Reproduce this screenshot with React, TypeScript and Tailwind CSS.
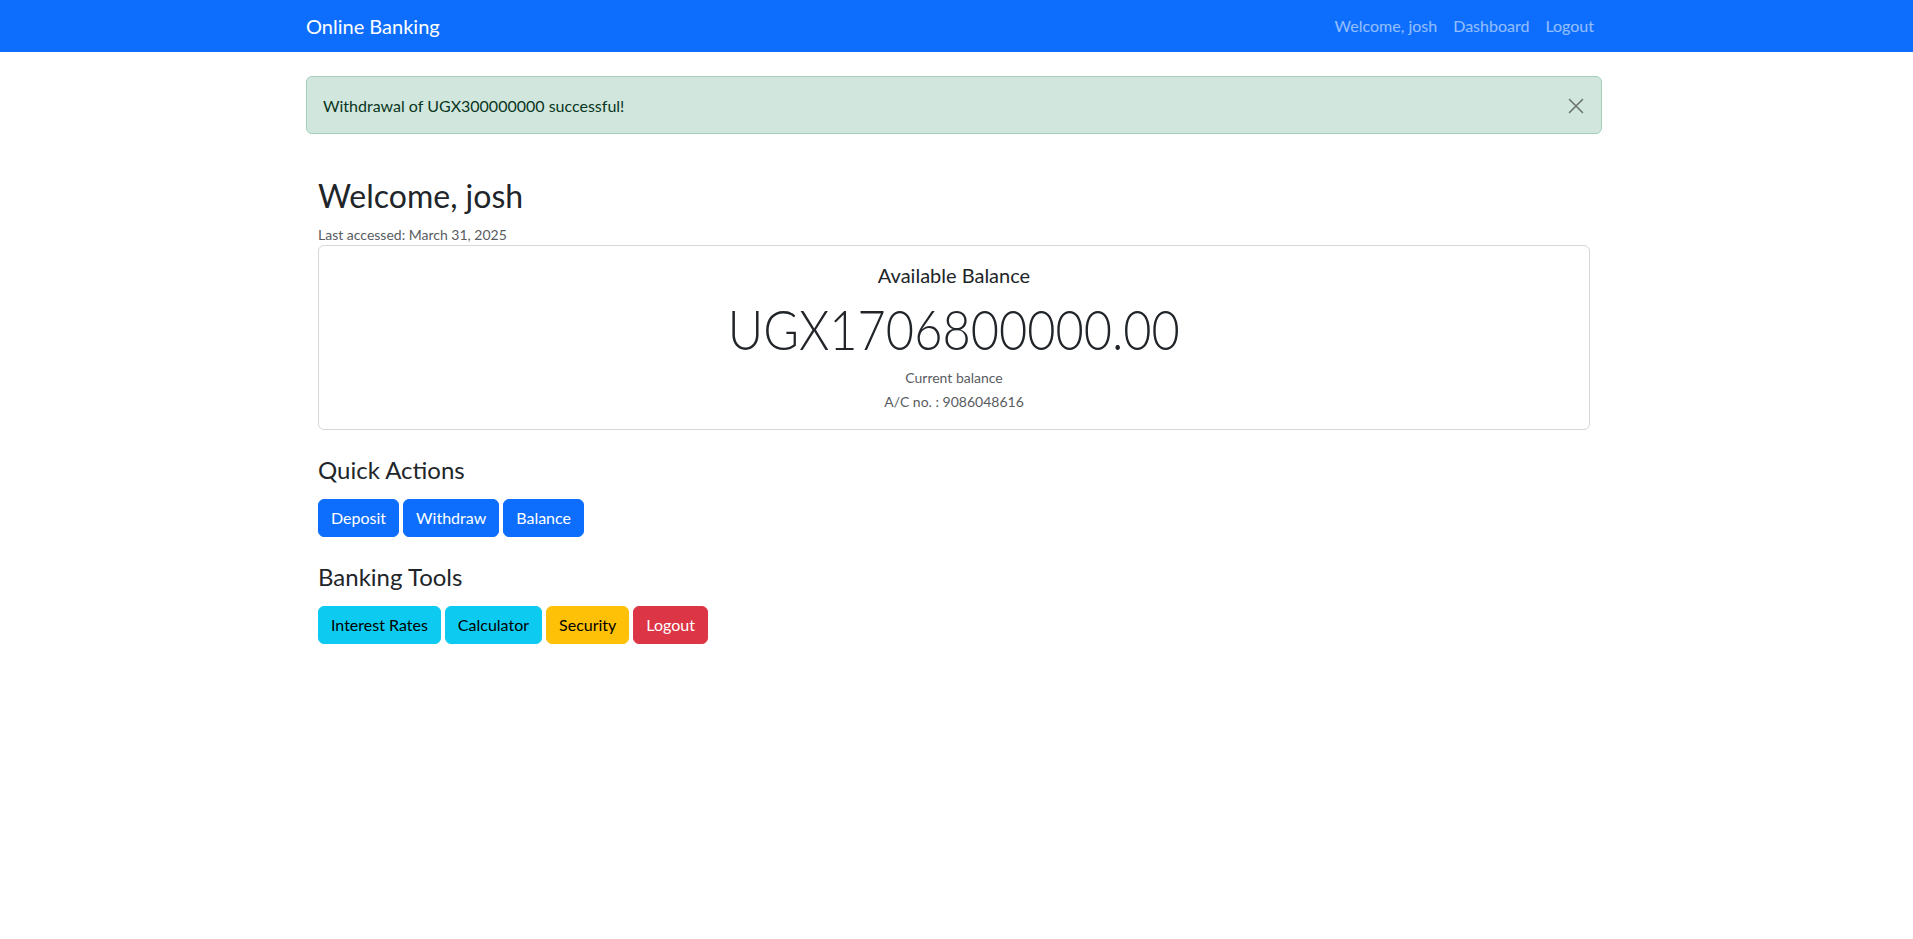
import React from "react";

function CloseIcon() {
  return (
    <svg width="16" height="16" viewBox="0 0 16 16" fill="none" aria-hidden="true">
      <path d="M1.5 1.5L14.5 14.5M14.5 1.5L1.5 14.5" stroke="currentColor" strokeWidth="1.6" strokeLinecap="round" />
    </svg>
  );
}

const quickActions = ["Deposit", "Withdraw", "Balance"];

const tools = [
  { label: "Interest Rates", cls: "bg-[#0dcaf0] border-[#0dcaf0] text-black" },
  { label: "Calculator", cls: "bg-[#0dcaf0] border-[#0dcaf0] text-black" },
  { label: "Security", cls: "bg-[#ffc107] border-[#ffc107] text-black" },
  { label: "Logout", cls: "bg-[#dc3545] border-[#dc3545] text-white" },
];

export default function App() {
  return (
    <div className="min-h-screen bg-white font-[Lato,'Liberation_Sans',sans-serif] text-[16px] leading-[1.5] text-[#212529]">
      <nav className="h-[52px] bg-[#0d6efd]">
        <div className="ml-[306px] flex h-full w-[1296px] items-center justify-between">
          <a href="#" className="text-[20px] text-white">
            Online Banking
          </a>
          <div className="flex items-center">
            <a href="#" className="px-2 text-white/55">Welcome, josh</a>
            <a href="#" className="px-2 text-white/55">Dashboard</a>
            <a href="#" className="px-2 text-white/55">Logout</a>
          </div>
        </div>
      </nav>

      <main className="ml-[306px] w-[1296px] pt-6">
        <div className="flex items-center justify-between rounded-md border border-[#a3cfbb] bg-[#d1e7dd] pt-[17px] pb-[15px] pl-4 pr-[17px] text-[#0a3622]">
          <span>Withdrawal of UGX300000000 successful!</span>
          <button className="text-black/50">
            <CloseIcon />
          </button>
        </div>

        <div className="px-3 pt-[43px]">
          <h2 className="mb-[9px] text-[32px] leading-[1.2]">Welcome, josh</h2>
          <p className="text-[14px] text-[#595c5f]">Last accessed: March 31, 2025</p>

          <div className="rounded-md border border-[#d6d6d6] px-4 pb-[17px] pt-[17px] text-center">
            <h5 className="mb-2 text-[20px] leading-[1.2]">Available Balance</h5>
            <div className="mt-[2px] leading-[1.2]">
              <span className="inline-block origin-center scale-x-[0.87] text-[56px] font-light">UGX1706800000.00</span>
            </div>
            <p className="mt-[4px] text-[14px] text-[#595c5f]">Current balance</p>
            <p className="mt-[3px] text-[14px] text-[#595c5f]">A/C no. : 9086048616</p>
          </div>

          <h4 className="mt-[26px] mb-[15px] text-[24px] leading-[1.2]">Quick Actions</h4>
          <div className="flex gap-1">
            {quickActions.map((a) => (
              <button key={a} className="rounded-md border border-[#0d6efd] bg-[#0d6efd] px-3 py-[6px] text-white">
                {a}
              </button>
            ))}
          </div>

          <h4 className="mt-[26px] mb-[14px] text-[24px] leading-[1.2]">Banking Tools</h4>
          <div className="flex gap-1">
            {tools.map((t) => (
              <button key={t.label} className={`rounded-md border px-3 py-[6px] ${t.cls}`}>
                {t.label}
              </button>
            ))}
          </div>
        </div>
      </main>
    </div>
  );
}
